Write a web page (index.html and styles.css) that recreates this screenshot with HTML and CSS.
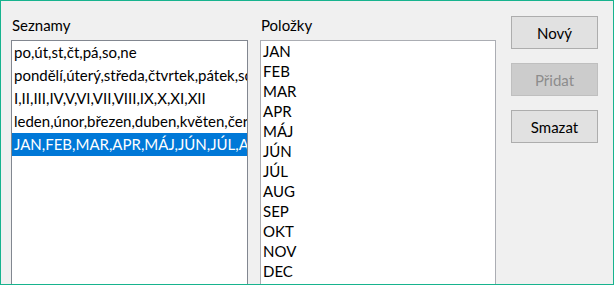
FILE: index.html
```html
<!DOCTYPE html>
<html lang="cs">

<head>
  <meta charset="UTF-8">
  <meta name="viewport" content="width=device-width, initial-scale=1.0">
  <title>Seznamy</title>
  <link rel="stylesheet" href="styles.css">
</head>

<body>
  <div class="dialog">
    <div class="column lists-col">
      <div class="label">Seznamy</div>
      <ul class="listbox lists focused">
        <li>po,út,st,čt,pá,so,ne</li>
        <li>pondělí,úterý,středa,čtvrtek,pátek,sobota,neděle</li>
        <li>I,II,III,IV,V,VI,VII,VIII,IX,X,XI,XII</li>
        <li>leden,únor,březen,duben,květen,červen,červenec,srpen,září,říjen,listopad,prosinec</li>
        <li class="selected">JAN,FEB,MAR,APR,MÁJ,JÚN,JÚL,AUG,SEP,OKT,NOV,DEC</li>
      </ul>
    </div>

    <div class="column items-col">
      <div class="label">Položky</div>
      <ul class="listbox items">
        <li>JAN</li>
        <li>FEB</li>
        <li>MAR</li>
        <li>APR</li>
        <li>MÁJ</li>
        <li>JÚN</li>
        <li>JÚL</li>
        <li>AUG</li>
        <li>SEP</li>
        <li>OKT</li>
        <li>NOV</li>
        <li>DEC</li>
      </ul>
    </div>

    <div class="buttons">
      <button class="btn">Nový</button>
      <button class="btn" disabled>Přidat</button>
      <button class="btn">Smazat</button>
    </div>
  </div>
</body>

</html>
```

FILE: styles.css
```css
:root {
  --accent: #17b38e;
  --window-bg: #f0f0f0;
  --select: #0078d7;
}

html, body {
  margin: 0;
  padding: 0;
  overflow: hidden;
}

body {
  font-family: Lato, "Noto Sans", sans-serif;
  font-size: 15px;
  color: #000;
  background: var(--window-bg);
}

.dialog {
  box-sizing: border-box;
  width: 614px;
  height: 285px;
  overflow: hidden;
  display: flex;
  align-items: flex-start;
  padding: 14px 0 0 10px;
  border: 1px solid var(--accent);
  background: var(--window-bg);
}

.column {
  display: flex;
  flex-direction: column;
}

.lists-col {
  width: 237px;
}

.items-col {
  width: 236px;
  margin-left: 12px;
}

.label {
  height: 20px;
  line-height: 20px;
  margin-bottom: 5px;
  padding-left: 1px;
}

.listbox {
  list-style: none;
  margin: 0;
  padding: 0;
  height: 260px;
  background: #fff;
  border: 1px solid #abadb3;
  overflow: hidden;
}

.listbox.focused {
  border-color: #828790;
}

.listbox li {
  white-space: nowrap;
  overflow: hidden;
  padding-left: 2px;
}

.lists li {
  height: 23px;
  line-height: 23px;
}

.items li {
  height: 20px;
  line-height: 20px;
}

.listbox li.selected {
  background: var(--select);
  color: #fff;
}

.buttons {
  display: flex;
  flex-direction: column;
  gap: 14px;
  margin-left: 15px;
  margin-top: 1px;
}

.btn {
  box-sizing: border-box;
  width: 87px;
  height: 33px;
  padding: 0;
  font-family: inherit;
  font-size: 15px;
  color: #000;
  background: #e1e1e1;
  border: 1px solid #adadad;
  border-radius: 0;
}

.btn:disabled {
  color: #8d8d8d;
  background: #cccccc;
  border-color: #bfbfbf;
}
```
